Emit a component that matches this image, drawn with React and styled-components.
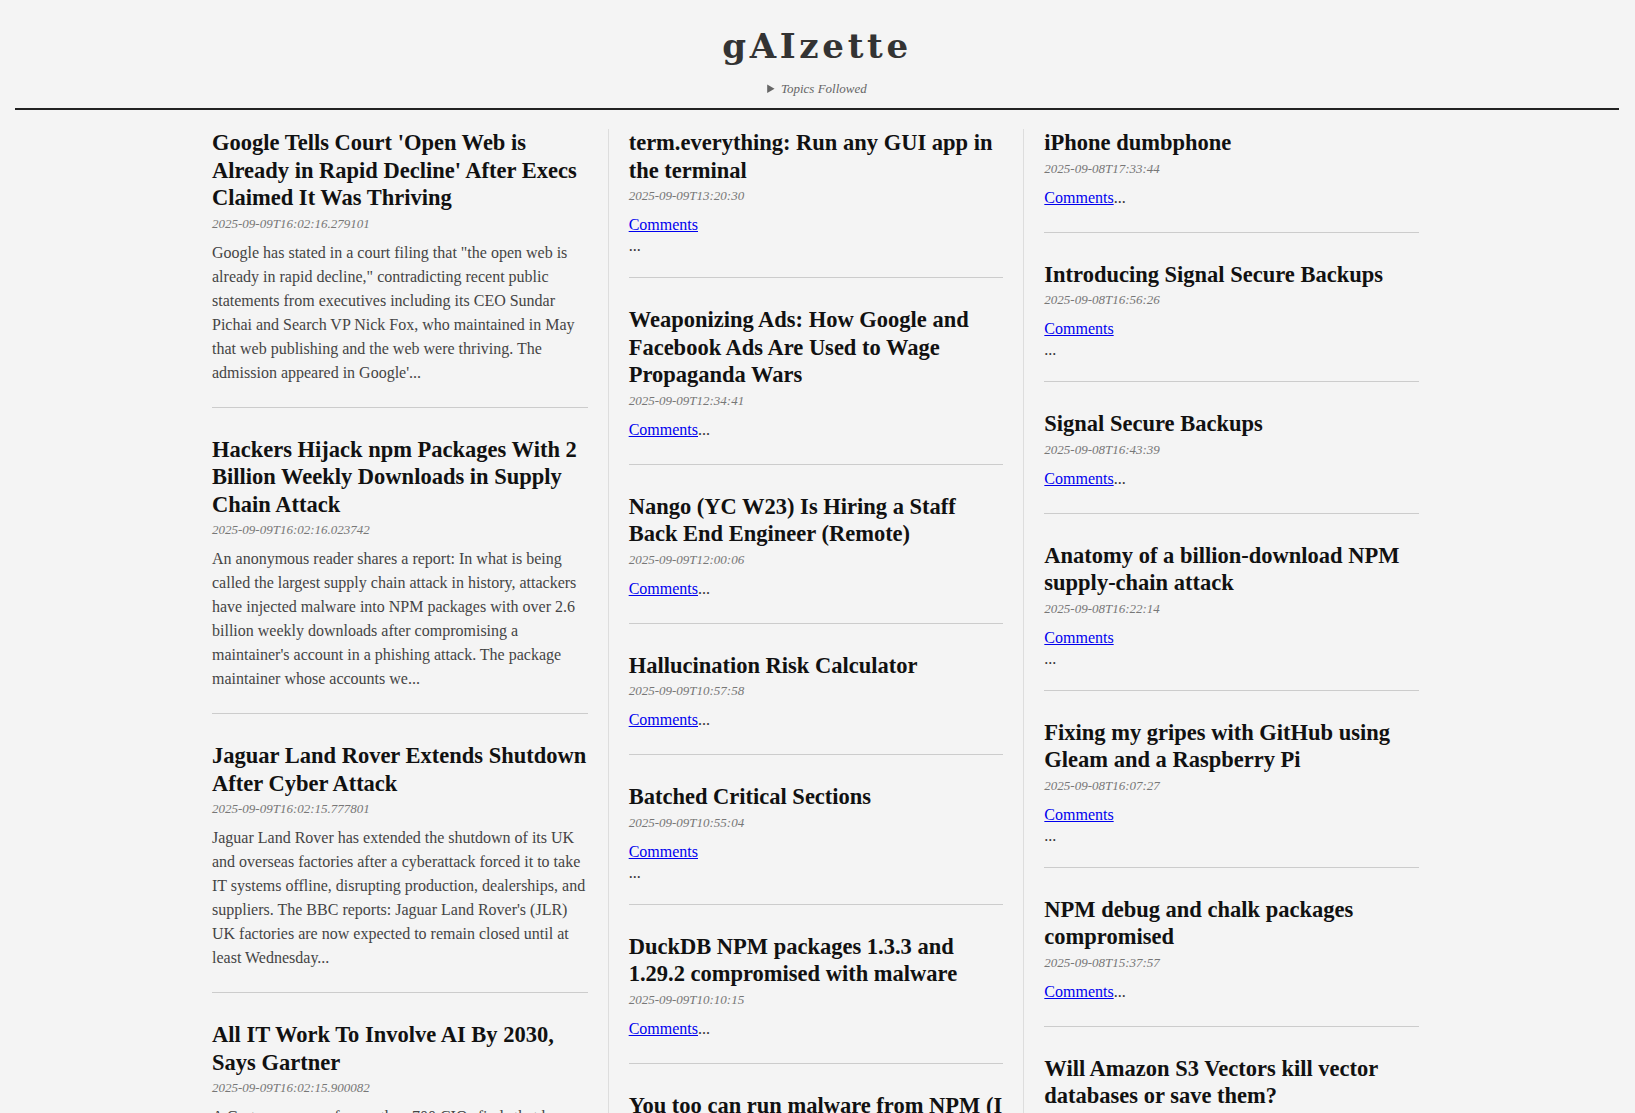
import React from 'react';
import styled, { createGlobalStyle } from 'styled-components';

const columns = [
  [
    {
      title: "Google Tells Court 'Open Web is Already in Rapid Decline' After Execs Claimed It Was Thriving",
      date: '2025-09-09T16:02:16.279101',
      summary:
        'Google has stated in a court filing that "the open web is already in rapid decline," contradicting recent public statements from executives including its CEO Sundar Pichai and Search VP Nick Fox, who maintained in May that web publishing and the web were thriving. The admission appeared in Google\'...',
    },
    {
      title: 'Hackers Hijack npm Packages With 2 Billion Weekly Downloads in Supply Chain Attack',
      date: '2025-09-09T16:02:16.023742',
      summary:
        "An anonymous reader shares a report: In what is being called the largest supply chain attack in history, attackers have injected malware into NPM packages with over 2.6 billion weekly downloads after compromising a maintainer's account in a phishing attack. The package maintainer whose accounts we...",
    },
    {
      title: 'Jaguar Land Rover Extends Shutdown After Cyber Attack',
      date: '2025-09-09T16:02:15.777801',
      summary:
        "Jaguar Land Rover has extended the shutdown of its UK and overseas factories after a cyberattack forced it to take IT systems offline, disrupting production, dealerships, and suppliers. The BBC reports: Jaguar Land Rover's (JLR) UK factories are now expected to remain closed until at least Wednesday...",
    },
    {
      title: 'All IT Work To Involve AI By 2030, Says Gartner',
      date: '2025-09-09T16:02:15.900082',
      summary:
        'A Gartner survey of more than 700 CIOs finds that by 2030 no IT work will be done by humans without AI, with 75% done by humans augmented by AI and 25% done by AI alone. The research firm says...',
    },
  ],
  [
    { title: 'term.everything: Run any GUI app in the terminal', date: '2025-09-09T13:20:30', comments: 'break' },
    {
      title: 'Weaponizing Ads: How Google and Facebook Ads Are Used to Wage Propaganda Wars',
      date: '2025-09-09T12:34:41',
      comments: 'inline',
    },
    { title: 'Nango (YC W23) Is Hiring a Staff Back End Engineer (Remote)', date: '2025-09-09T12:00:06', comments: 'inline' },
    { title: 'Hallucination Risk Calculator', date: '2025-09-09T10:57:58', comments: 'inline' },
    { title: 'Batched Critical Sections', date: '2025-09-09T10:55:04', comments: 'break' },
    { title: 'DuckDB NPM packages 1.3.3 and 1.29.2 compromised with malware', date: '2025-09-09T10:10:15', comments: 'inline' },
    { title: 'You too can run malware from NPM (I mean without consequences)', date: '2025-09-09T09:48:12', comments: 'inline' },
  ],
  [
    { title: 'iPhone dumbphone', date: '2025-09-08T17:33:44', comments: 'inline' },
    { title: 'Introducing Signal Secure Backups', date: '2025-09-08T16:56:26', comments: 'break' },
    { title: 'Signal Secure Backups', date: '2025-09-08T16:43:39', comments: 'inline' },
    { title: 'Anatomy of a billion-download NPM supply-chain attack', date: '2025-09-08T16:22:14', comments: 'break' },
    { title: 'Fixing my gripes with GitHub using Gleam and a Raspberry Pi', date: '2025-09-08T16:07:27', comments: 'break' },
    { title: 'NPM debug and chalk packages compromised', date: '2025-09-08T15:37:57', comments: 'inline' },
    { title: 'Will Amazon S3 Vectors kill vector databases or save them?', date: '2025-09-08T15:18:42', comments: 'inline' },
  ],
];

const GlobalStyle = createGlobalStyle`
  body {
    margin: 0;
    background: #f4f4f4;
    font-family: 'Liberation Serif', 'Times New Roman', serif;
    color: #111;
  }
`;

const Masthead = styled.header`
  margin: 0 16px 0 15px;
  padding: 24px 0 11px;
  border-bottom: 2px solid #222;
  text-align: center;
`;

const Title = styled.h1`
  margin: 0 0 13px;
  font-family: 'DejaVu Serif', serif;
  font-size: 34px;
  line-height: 44px;
  font-weight: 700;
  letter-spacing: 3.7px;
  color: #333;
`;

const Topics = styled.details`
  font-size: 13px;
  font-style: italic;
  color: #666;
`;

const TopicsToggle = styled.summary`
  cursor: pointer;
`;

const Columns = styled.main`
  display: grid;
  grid-template-columns: repeat(3, 1fr);
  width: 1247px;
  padding-right: 4px;
  margin: 19px auto 0;
`;

const Column = styled.section`
  padding: 0 20px;
  border-left: ${(p) => (p.$first ? 'none' : '1px solid #ddd')};
  min-width: 0;
`;

const Article = styled.article`
  padding-bottom: 22px;
  margin-bottom: 28px;
  border-bottom: 1px solid #ccc;
`;

const Headline = styled.h2`
  margin: 0;
  font-size: 22.5px;
  line-height: 27.5px;
  font-weight: 700;
  color: #111;
`;

const Stamp = styled.div`
  margin-top: 4px;
  font-size: 13px;
  line-height: 16px;
  font-style: italic;
  color: #777;
`;

const Blurb = styled.div`
  margin-top: 9px;
  font-size: 16px;
  line-height: 1.5;
  color: #444;
`;

const CommentsLink = styled.a`
  color: #00e;
  text-decoration: underline;
`;

const Ellipsis = styled.span`
  display: ${(p) => (p.$inline ? 'inline' : 'block')};
  margin-top: ${(p) => (p.$inline ? '0' : '0')};
  line-height: ${(p) => (p.$inline ? 'inherit' : '18px')};
  color: #333;
`;

const Story = ({ item }) => (
  <Article>
    <Headline>{item.title}</Headline>
    <Stamp>{item.date}</Stamp>
    {item.summary ? (
      <Blurb>{item.summary}</Blurb>
    ) : (
      <Blurb>
        <CommentsLink href='#'>Comments</CommentsLink>
        <Ellipsis $inline={item.comments === 'inline'}>...</Ellipsis>
      </Blurb>
    )}
  </Article>
);

const App = () => {
  return (
    <>
      <GlobalStyle />
      <Masthead>
        <Title>gAIzette</Title>
        <Topics>
          <TopicsToggle>Topics Followed</TopicsToggle>
        </Topics>
      </Masthead>
      <Columns>
        {columns.map((list, i) => (
          <Column key={i} $first={i === 0}>
            {list.map((item) => (
              <Story key={item.title} item={item} />
            ))}
          </Column>
        ))}
      </Columns>
    </>
  );
};

export default App;
